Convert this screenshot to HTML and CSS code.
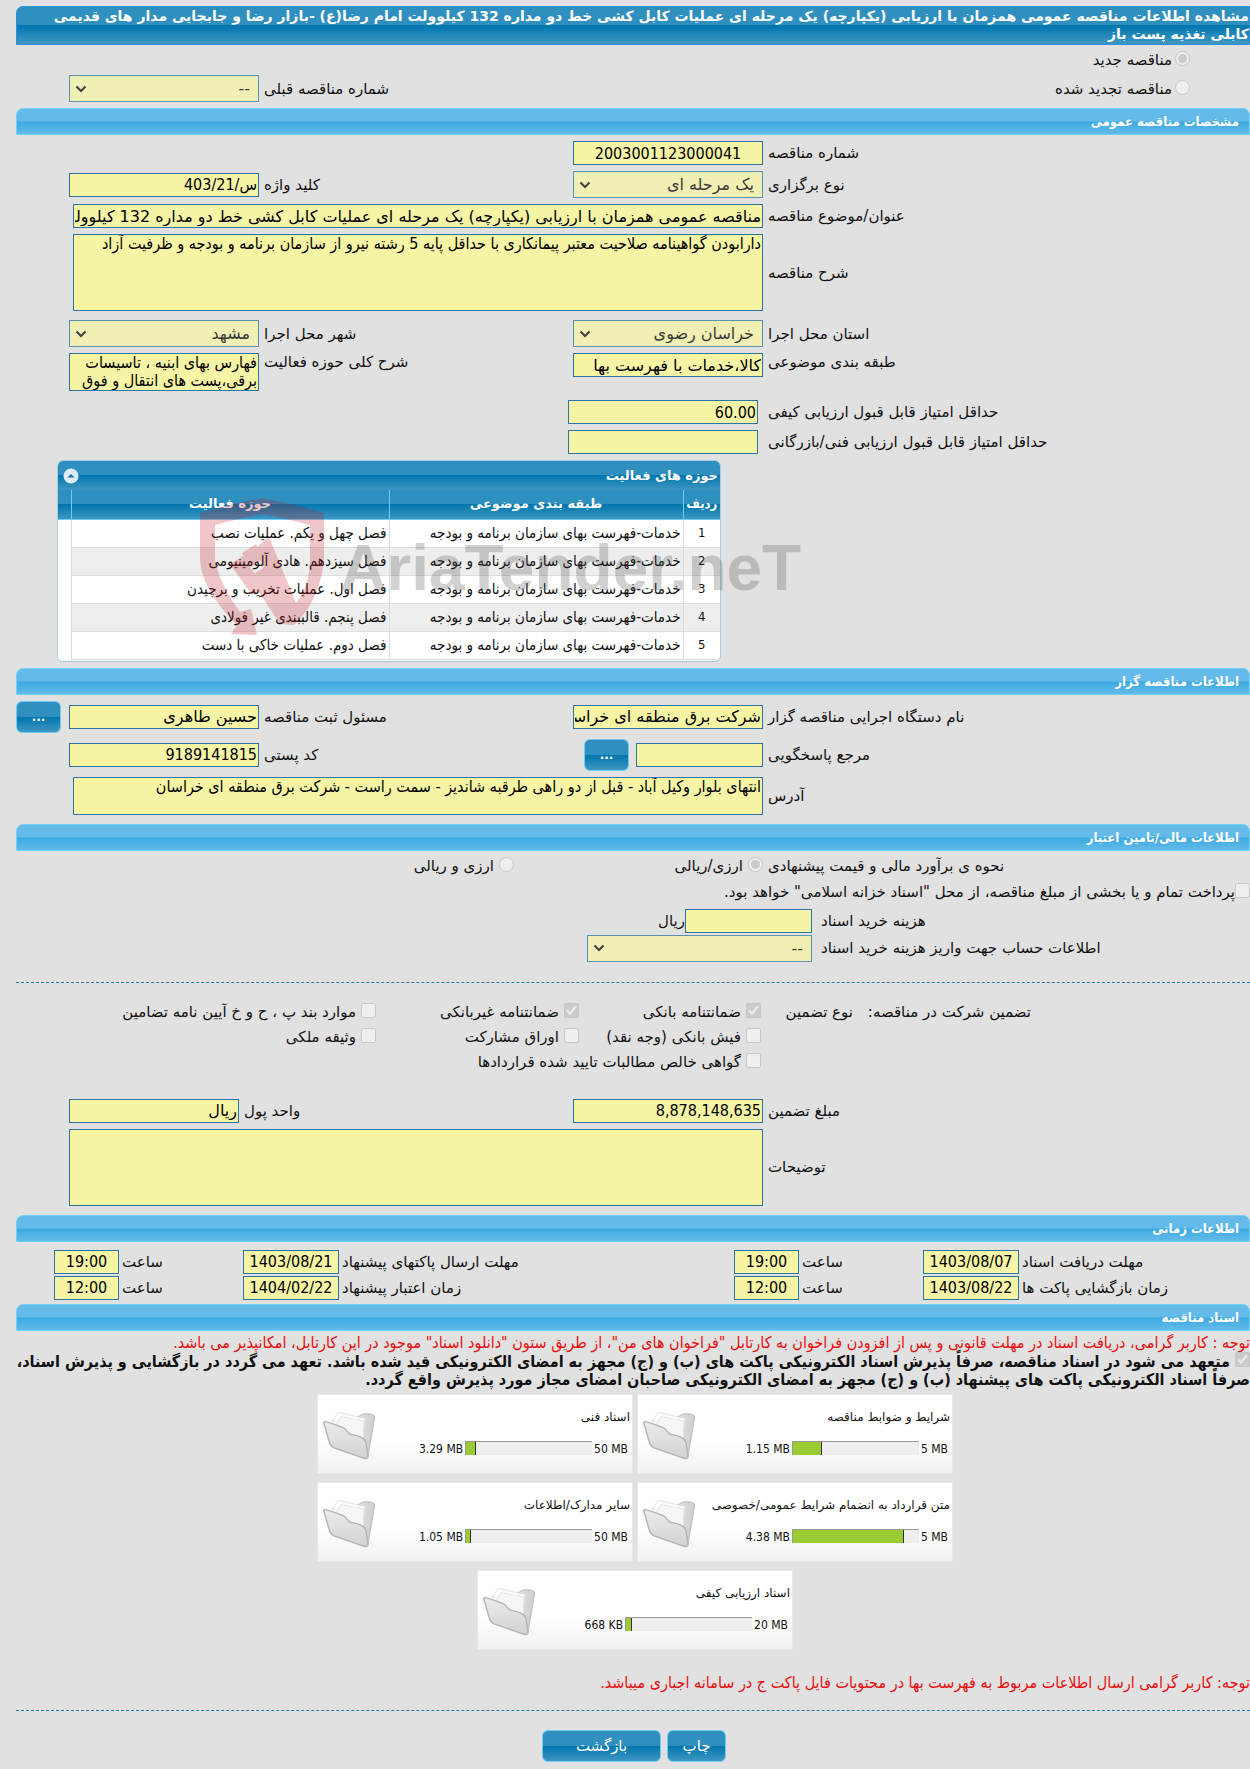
FILE: index.html
```html
<!DOCTYPE html>
<html lang="fa" dir="rtl">
<head>
<meta charset="utf-8">
<title>مشاهده اطلاعات مناقصه عمومی</title>
<link rel="stylesheet" href="styles.css">
</head>
<body>
<svg class="defs" aria-hidden="true">
  <defs>
    <linearGradient id="fold-front" x1="0" y1="0" x2="0" y2="1"><stop offset="0" stop-color="#ececec"/><stop offset="1" stop-color="#d2d2d2"/></linearGradient>
    <linearGradient id="fold-back" x1="0" y1="0" x2="1" y2="0"><stop offset="0" stop-color="#f4f4f4"/><stop offset="1" stop-color="#cfcfcf"/></linearGradient>
    <symbol id="folder" viewBox="0 0 54 60" preserveAspectRatio="none">
      <path d="M11 14 Q30 16 38 9 Q45 4 52 9 Q53 11 52 14 L46 54 L40 52 Z" fill="url(#fold-back)" stroke="#c4c4c4" stroke-width="1.5"/>
      <path d="M11 14 L16 5 L43 12 L40 46 L14 36 Z" fill="#fdfdfd" stroke="#dcdcdc"/>
      <path d="M15 17 L19 10 L42 15 L41 44 L16 38 Z" fill="#f6f6f6" stroke="#e2e2e2"/>
      <path d="M2 18 Q1 14 5 16 L20 22 Q23 23 26 28 Q28 31 32 31 Q42 33 44 40 L46 56 Q46 59 42 58 L12 46 Q8 44 7 38 Z" fill="url(#fold-front)" stroke="#b4b4b4" stroke-width="1.5"/>
    </symbol>
  </defs>
</svg>
<main class="page">
  <h1 class="title">مشاهده اطلاعات مناقصه عمومی همزمان با ارزیابی (یکپارچه) یک مرحله ای عملیات کابل کشی خط دو مداره 132 کیلوولت امام رضا(ع) -بازار رضا و جابجایی مدار های قدیمی کابلی تغذیه پست باز</h1>

  <div class="row kind">
    <label class="choice"><input type="radio" name="kind" checked disabled>مناقصه جدید</label>
  </div>
  <div class="row">
    <label class="choice"><input type="radio" name="kind" disabled>مناقصه تجدید شده</label>
    <label class="label c3" for="prev">شماره مناقصه قبلی</label>
    <select class="field" id="prev" disabled><option>--</option></select>
  </div>

  <h2 class="section">مشخصات مناقصه عمومی</h2>
  <div class="rows">
    <div class="row">
      <label class="label" for="num">شماره مناقصه</label>
      <input class="field center" id="num" value="2003001123000041" readonly>
    </div>
    <div class="row">
      <label class="label" for="type">نوع برگزاری</label>
      <select class="field" id="type" disabled><option>یک مرحله ای</option></select>
      <label class="label" for="key">کلید واژه</label>
      <input class="field" id="key" value="س/403/21" readonly>
    </div>
    <div class="row">
      <label class="label" for="subject">عنوان/موضوع مناقصه</label>
      <input class="field words wide" id="subject" value="مناقصه عمومی همزمان با ارزیابی (یکپارچه) یک مرحله ای عملیات کابل کشی خط دو مداره 132 کیلوولت امام رضا(ع)" readonly>
    </div>
    <div class="row">
      <label class="label" for="desc">شرح مناقصه</label>
      <textarea class="field wide tall" id="desc" readonly>دارابودن گواهینامه صلاحیت معتبر پیمانکاری با حداقل پایه 5 رشته نیرو از سازمان برنامه و بودجه و ظرفیت آزاد</textarea>
    </div>
    <div class="row after-area">
      <label class="label" for="province">استان محل اجرا</label>
      <select class="field" id="province" disabled><option>خراسان رضوی</option></select>
      <label class="label" for="city">شهر محل اجرا</label>
      <select class="field" id="city" disabled><option>مشهد</option></select>
    </div>
    <div class="row top">
      <label class="label" for="cat">طبقه بندی موضوعی</label>
      <input class="field words" id="cat" value="کالا،خدمات با فهرست بها" readonly>
      <label class="label" for="scope">شرح کلی حوزه فعالیت</label>
      <textarea class="field short" id="scope" readonly>فهارس بهای ابنیه ، تاسیسات برقی،پست های انتقال و فوق</textarea>
    </div>
    <div class="row after-area">
      <label class="label" for="q1">حداقل امتیاز قابل قبول ارزیابی کیفی</label>
      <input class="field score" id="q1" value="60.00" readonly>
    </div>
    <div class="row">
      <label class="label" for="q2">حداقل امتیاز قابل قبول ارزیابی فنی/بازرگانی</label>
      <input class="field score" id="q2" readonly>
    </div>
  </div>

  <div class="panel">
    <div class="panel-head">
      <span>حوزه های فعالیت</span>
      <svg width="16" height="16" viewBox="0 0 16 16" aria-hidden="true"><circle cx="8" cy="8" r="7.5" fill="#dcebf7"/><path d="M4.500 9.500 L8 6 L11.500 9.500 Z" fill="#1b6ea5"/></svg>
    </div>
    <table class="grid">
      <thead><tr><th class="col-n">ردیف</th><th class="col-cat">طبقه بندی موضوعی</th><th>حوزه فعالیت</th><th class="col-pad"></th></tr></thead>
      <tbody>
        <tr><td class="n">1</td><td>خدمات-فهرست بهای سازمان برنامه و بودجه</td><td>فصل چهل و یکم. عملیات نصب</td><td></td></tr>
        <tr><td class="n">2</td><td>خدمات-فهرست بهای سازمان برنامه و بودجه</td><td>فصل سیزدهم. هادی آلومینیومی</td><td></td></tr>
        <tr><td class="n">3</td><td>خدمات-فهرست بهای سازمان برنامه و بودجه</td><td>فصل اول. عملیات تخریب و برچیدن</td><td></td></tr>
        <tr><td class="n">4</td><td>خدمات-فهرست بهای سازمان برنامه و بودجه</td><td>فصل پنجم. قالببندی غیر فولادی</td><td></td></tr>
        <tr><td class="n">5</td><td>خدمات-فهرست بهای سازمان برنامه و بودجه</td><td>فصل دوم. عملیات خاکی با دست</td><td></td></tr>
      </tbody>
    </table>
    <div class="watermark" dir="ltr">
      <svg width="126" height="140" viewBox="0 0 126 140" aria-hidden="true">
        <path fill="#c4161c" fill-rule="evenodd" d="M62 0 Q90 5 124 15 V62 Q120 102 94 127 L80 126 L49 79 L63 70 L57 49 L69 39 L96 105 Q110 88 110 60 V27 Q84 20 62 16 Q40 20 15 27 V60 Q18 84 40 114 L51 111 L57 137 L31 136 L37 127 Q0 90 0 60 V15 Q34 5 62 0 Z"/>
        <path fill="#c4161c" d="M30 66 L43 58 L64 90 L52 97 Z M42 55 L56 46 L62 62 L49 70 Z"/>
      </svg>
      <span>AriaTender.neT</span>
    </div>
  </div>

  <h2 class="section">اطلاعات مناقصه گزار</h2>
  <div class="rows">
    <div class="row">
      <label class="label" for="org">نام دستگاه اجرایی مناقصه گزار</label>
      <input class="field words" id="org" value="شرکت برق منطقه ای خراسان رضوی" readonly>
      <label class="label" for="owner">مسئول ثبت مناقصه</label>
      <input class="field words" id="owner" value="حسین طاهری" readonly>
      <button class="btn dots" type="button">...</button>
    </div>
    <div class="row">
      <label class="label" for="ref">مرجع پاسخگویی</label>
      <div class="pair"><input class="field" id="ref" readonly><button class="btn dots" type="button">...</button></div>
      <label class="label" for="zip">کد پستی</label>
      <input class="field" id="zip" value="9189141815" readonly>
    </div>
    <div class="row">
      <label class="label" for="addr">آدرس</label>
      <textarea class="field wide short" id="addr" readonly>انتهای بلوار وکیل آباد - قبل از دو راهی طرقبه شاندیز - سمت راست - شرکت برق منطقه ای خراسان</textarea>
    </div>
  </div>

  <h2 class="section spaced">اطلاعات مالی/تامین اعتبار</h2>
  <div class="money">
    <div class="row">
      <span class="label">نحوه ی برآورد مالی و قیمت پیشنهادی</span>
      <label class="opt"><input type="radio" name="cur" checked disabled>ارزی/ریالی</label>
      <label class="opt both"><input type="radio" name="cur" disabled>ارزی و ریالی</label>
    </div>
    <label class="opt treasury"><input type="checkbox" disabled>پرداخت تمام و یا بخشی از مبلغ مناقصه، از محل "اسناد خزانه اسلامی" خواهد بود.</label>
    <div class="row cost">
      <label class="label" for="fee">هزینه خرید اسناد</label>
      <div class="pair"><input class="field" id="fee" readonly><span>ریال</span></div>
      <label class="label" for="acc">اطلاعات حساب جهت واریز هزینه خرید اسناد</label>
      <select class="field" id="acc" disabled><option>--</option></select>
    </div>
  </div>

  <hr>
  <div class="guarantee">
    <span>تضمین شرکت در مناقصه:</span>
    <span>نوع تضمین</span>
    <label class="opt"><input type="checkbox" checked disabled>ضمانتنامه بانکی</label>
    <label class="opt"><input type="checkbox" checked disabled>ضمانتنامه غیربانکی</label>
    <label class="opt"><input type="checkbox" disabled>موارد بند پ ، ح و خ آیین نامه تضامین</label>
    <label class="opt line2"><input type="checkbox" disabled>فیش بانکی (وجه نقد)</label>
    <label class="opt"><input type="checkbox" disabled>اوراق مشارکت</label>
    <label class="opt"><input type="checkbox" disabled>وثیقه ملکی</label>
    <label class="opt line3"><input type="checkbox" disabled>گواهی خالص مطالبات تایید شده قراردادها</label>
  </div>
  <div class="rows">
    <div class="row">
      <label class="label" for="amount">مبلغ تضمین</label>
      <input class="field" id="amount" value="8,878,148,635" readonly>
      <div class="unit"><label for="unit">واحد پول</label><input class="field words" id="unit" value="ریال" readonly></div>
    </div>
    <div class="row">
      <label class="label" for="notes">توضیحات</label>
      <textarea class="field full tall" id="notes" readonly></textarea>
    </div>
  </div>

  <h2 class="section spaced">اطلاعات زمانی</h2>
  <div class="times">
    <label class="label" for="d1">مهلت دریافت اسناد</label><input class="field center" id="d1" value="1403/08/07" readonly>
    <label class="label" for="t1">ساعت</label><input class="field center" id="t1" value="19:00" readonly>
    <label class="label" for="d2">مهلت ارسال پاکتهای پیشنهاد</label><input class="field center" id="d2" value="1403/08/21" readonly>
    <label class="label" for="t2">ساعت</label><input class="field center" id="t2" value="19:00" readonly>
    <label class="label" for="d3">زمان بازگشایی پاکت ها</label><input class="field center" id="d3" value="1403/08/22" readonly>
    <label class="label" for="t3">ساعت</label><input class="field center" id="t3" value="12:00" readonly>
    <label class="label" for="d4">زمان اعتبار پیشنهاد</label><input class="field center" id="d4" value="1404/02/22" readonly>
    <label class="label" for="t4">ساعت</label><input class="field center" id="t4" value="12:00" readonly>
  </div>

  <h2 class="section docs">اسناد مناقصه</h2>
  <p class="notice">توجه : کاربر گرامی، دریافت اسناد در مهلت قانونی و پس از افزودن فراخوان به کارتابل "فراخوان های من"، از طریق ستون "دانلود اسناد" موجود در این کارتابل، امکانپذیر می باشد.</p>
  <label class="pledge"><input type="checkbox" checked disabled>متعهد می شود در اسناد مناقصه، صرفاً پذیرش اسناد الکترونیکی پاکت های (ب) و (ج) مجهز به امضای الکترونیکی قید شده باشد. تعهد می گردد در بازگشایی و پذیرش اسناد، صرفاً اسناد الکترونیکی پاکت های پیشنهاد (ب) و (ج) مجهز به امضای الکترونیکی صاحبان امضای مجاز مورد پذیرش واقع گردد.</label>
  <ul class="cards">
    <li class="card"><svg><use href="#folder"/></svg><h3>شرایط و ضوابط مناقصه</h3><div class="quota"><bdi>5 MB</bdi><span class="bar" dir="ltr"><i style="width:23%"></i></span><bdi>1.15 MB</bdi></div></li>
    <li class="card"><svg><use href="#folder"/></svg><h3>اسناد فنی</h3><div class="quota"><bdi>50 MB</bdi><span class="bar" dir="ltr"><i style="width:8%"></i></span><bdi>3.29 MB</bdi></div></li>
    <li class="card"><svg><use href="#folder"/></svg><h3>متن قرارداد به انضمام شرایط عمومی/خصوصی</h3><div class="quota"><bdi>5 MB</bdi><span class="bar" dir="ltr"><i style="width:88%"></i></span><bdi>4.38 MB</bdi></div></li>
    <li class="card"><svg><use href="#folder"/></svg><h3>سایر مدارک/اطلاعات</h3><div class="quota"><bdi>50 MB</bdi><span class="bar" dir="ltr"><i style="width:4%"></i></span><bdi>1.05 MB</bdi></div></li>
    <li class="card"><svg><use href="#folder"/></svg><h3>اسناد ارزیابی کیفی</h3><div class="quota"><bdi>20 MB</bdi><span class="bar" dir="ltr"><i style="width:5%"></i></span><bdi>668 KB</bdi></div></li>
  </ul>
  <p class="notice final">توجه: کاربر گرامی ارسال اطلاعات مربوط به فهرست بها در محتویات فایل پاکت ج در سامانه اجباری میباشد.</p>
  <hr class="last">
  <div class="actions"><button class="btn" type="button">چاپ</button><button class="btn back" type="button">بازگشت</button></div>
</main>
</body>
</html>
```
FILE: styles.css
```css
* { box-sizing: border-box; }
html { background: #e1e1e1; }
body { margin: 0; overflow-x: hidden; color: #111; font: 15px/18px "DejaVu Sans", sans-serif; }
h1, h2, h3, p, ul { margin: 0; padding: 0; font-size: inherit; }
input, select, textarea, button { font-family: inherit; }
.defs { position: absolute; width: 0; height: 0; }
.page { padding: 6px 0 6px 16px; }

.title { border: 1px solid #2a8fe0; border-radius: 7px 0 0 0; padding: 0 0 1px; line-height: 18px; font-size: 14px; color: #fff; background: linear-gradient(#2f8fbf 50%, #0076ad 50%, #4098c4); }
.section { height: 27px; padding: 0 10px; border: 1px solid #70d1f7; border-radius: 7px 7px 0 0; background: linear-gradient(#64bbe9 49%, #3aa9e1 51%, #64bbe9); color: #fff; font-family: "DejaVu Sans Condensed", sans-serif; font-size: 13px; line-height: 25px; }
.section.spaced { margin-top: 9px; }

.rows { display: grid; gap: 6px; padding-top: 6px; }
.row { display: grid; grid-template-columns: minmax(0, 1fr) 190px 304px 190px 48px; column-gap: 5px; align-items: center; }
.row.top { align-items: start; }
.after-area { margin-top: 3px; }
.kind { height: 30px; }
.kind + .row { margin-bottom: 6px; }
.label { text-align: end; white-space: nowrap; }
.c3 { grid-column: 3; }
.choice { padding-right: 60px; display: flex; align-items: flex-start; gap: 3px; }
input[type="radio"], input[type="checkbox"] { width: 15px; height: 15px; margin: 0; flex: none; }

.field { width: 100%; height: 24px; margin: 0; padding: 0 1px; border: 1px solid #2c76a6; border-radius: 0; background: #f6f4a5; color: #000; font-family: "DejaVu Sans Condensed", sans-serif; font-size: 16px; outline: 0; }
.words { font-family: "DejaVu Sans", sans-serif; }
select.field { height: 27px; padding: 0 8px; appearance: none; font-family: "DejaVu Sans", sans-serif; opacity: .75; background: #f6f4a5 url("data:image/svg+xml,%3Csvg xmlns='http://www.w3.org/2000/svg' width='12' height='8'%3E%3Cpath d='M1.500 1.500 L6 6 L10.500 1.500' fill='none' stroke='%23111' stroke-width='2.2'/%3E%3C/svg%3E") no-repeat 5px 50%; }
textarea.field { display: block; line-height: 18px; resize: none; overflow: hidden; }
.center { text-align: center; }
.wide { grid-column: 2 / 5; width: calc(100% - 4px); }
.full { grid-column: 2 / 5; }
textarea.tall { height: 77px; }
textarea.short { height: 38px; }
.score { grid-column: 2 / 4; width: 190px; margin-right: 5px; }
.pair { display: flex; gap: 7px; align-items: center; }
.pair .field { width: 127px; flex: none; }
.unit { grid-column: 3 / 5; display: flex; justify-content: flex-end; align-items: center; gap: 5px; }
.unit .field { width: 170px; }

.btn { height: 32px; width: 59px; padding: 0; border: 1px solid #6fcdf5; border-radius: 6px; color: #fff; font-size: 15px; background: linear-gradient(#2f8fbf 50%, #0076ad 50%, #3f96c2); }
.btn.dots { width: 45px; font-weight: bold; font-size: 12px; justify-self: end; }

.panel { position: relative; width: 664px; margin: 6px auto 6px 41px; padding-bottom: 1px; border: 1px solid #a6cbe3; border-radius: 6px; background: #fff; }
.panel-head { display: flex; justify-content: space-between; align-items: center; height: 29px; padding: 0 2px 0 5px; border-radius: 5px 5px 0 0; color: #fff; font-size: 13px; font-weight: bold; background: linear-gradient(#2f8fbf 50%, #0076ad 50%, #3f96c2); }
.grid { width: 100%; border-collapse: collapse; table-layout: fixed; font-family: "DejaVu Sans Condensed", sans-serif; }
.grid th { height: 29px; padding: 0; color: #fff; font-family: "DejaVu Sans", sans-serif; font-size: 13px; background: linear-gradient(#2f8fbf 50%, #0076ad 50%, #3f96c2); border-left: 1px solid #6fcdf5; border-bottom: 1px solid #6fcdf5; }
.grid .col-n { font-family: inherit; }
.grid td { height: 28px; padding: 0 2px; border-left: 1px solid #ddd; border-bottom: 1px solid #ddd; white-space: nowrap; }
.grid tr > :last-child { border-left: 0; }
.grid tbody tr:nth-child(even) { background: #eee; }
.grid td:last-child { background: #fff; border-bottom: 0; }
.grid .n { text-align: center; font-size: 13px; }
.col-n { width: 37px; }
.col-cat { width: 294px; }
.col-pad { width: 13px; }
.watermark { position: absolute; left: 142px; top: 37px; display: flex; align-items: center; gap: 14px; opacity: .24; pointer-events: none; color: #444; font: bold 64px/80px "Liberation Sans", sans-serif; white-space: nowrap; }

.money { padding-top: 6px; }
.opt { display: flex; align-items: flex-start; gap: 5px; white-space: nowrap; }
.both { padding-right: 54px; }
.treasury { margin: 8px 0; gap: 0; }
.cost { grid-template-columns: minmax(0, 1fr) 225px 562px; column-gap: 9px; row-gap: 2px; }
.cost .label:nth-of-type(2), .cost select { grid-row: 2; }
.cost .pair { gap: 0; }
hr { margin: 20px 0 0; border: 0; border-top: 1px dashed #2c76a6; }
.guarantee { display: grid; grid-template-columns: 178px 92px 182px 203px 1fr; row-gap: 7px; padding: 20px 219px 22px 0; white-space: nowrap; }
.line2, .line3 { grid-column-start: 3; }

.times { display: grid; grid-template-columns: minmax(0, 1fr) 96px 118px 65px 389px 96px 118px 65px; gap: 2px 3px; align-items: center; padding: 8px 0 4px 38px; }
.notice { padding-top: 3px; color: #e81010; font-family: "DejaVu Sans Condensed", sans-serif; font-size: 16px; line-height: 18px; }
.pledge { display: block; font: bold 16px/18px "DejaVu Sans Condensed", sans-serif; }
.pledge input { margin-left: 5px; }
.cards { display: flex; flex-wrap: wrap; justify-content: center; gap: 8px 4px; max-width: 660px; margin: 5px 285px 0 auto; list-style: none; }
.card { display: grid; grid-template-columns: 1fr 56px; width: 316px; height: 80px; padding: 13px 2px 0 2px; background: linear-gradient(#fff 60%, #f0f0f0); border: 1px solid #e8e8e8; font-size: 12px; }
.card h3 { font-weight: normal; white-space: nowrap; }
.card svg { grid-column: 2; grid-row: 1 / 3; width: 54px; height: 52px; }
.quota { display: flex; gap: 2px; padding-right: 2px; font-family: "DejaVu Sans Condensed", sans-serif; line-height: 16px; }
.bar { width: 127px; height: 14px; border-top: 1px solid #999; border-left: 1px solid #999; background: #eee; }
.bar i { display: block; height: 13px; background: #9c3; border-right: 1px solid #333; }
.final { padding-top: 24px; }
hr.last { margin-top: 18px; }
.actions { display: flex; gap: 6px; padding: 19px 524px 0 0; }
.btn.back { width: 119px; }
```
